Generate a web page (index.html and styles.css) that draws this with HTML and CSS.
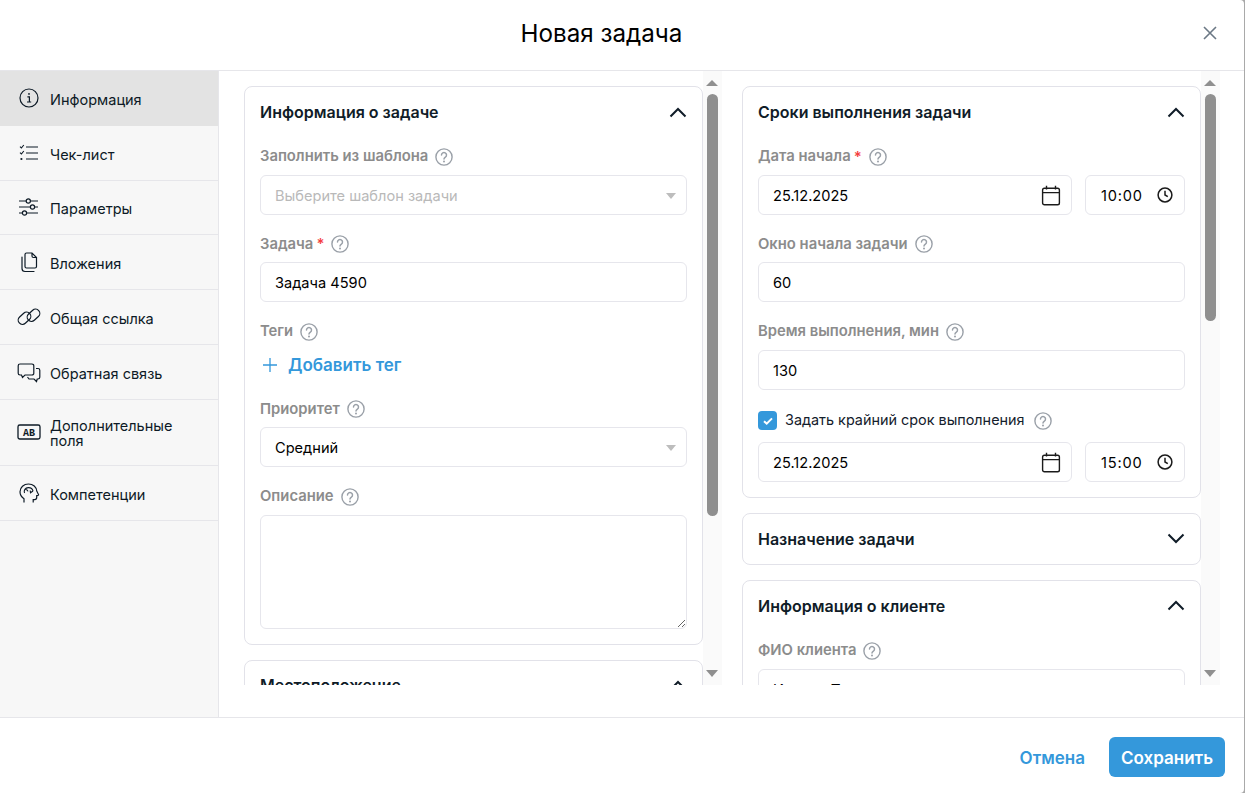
FILE: index.html
```html
<!DOCTYPE html>
<html lang="ru">
<head>
  <meta charset="UTF-8">
  <title>Новая задача</title>
  <link rel="stylesheet" href="styles.css">
</head>
<body>
  <svg class="sprite" xmlns="http://www.w3.org/2000/svg">
    <symbol id="help" viewBox="0 0 18 18">
      <circle cx="9" cy="9" r="8.1" fill="none" stroke="currentColor" stroke-width="1.4"/>
      <path d="M6.5 7a2.5 2.5 0 1 1 3.9 2.1c-.9.6-1.4 1.1-1.4 2" fill="none" stroke="currentColor" stroke-width="1.5" stroke-linecap="round"/>
      <circle cx="9" cy="13.6" r="1" fill="currentColor"/>
    </symbol>
    <symbol id="up" viewBox="0 0 18 11">
      <path d="M1.5 9.5 9 2l7.5 7.5" fill="none" stroke="currentColor" stroke-width="2"/>
    </symbol>
    <symbol id="down" viewBox="0 0 18 11">
      <path d="M1.5 1.5 9 9l7.5-7.5" fill="none" stroke="currentColor" stroke-width="2"/>
    </symbol>
    <symbol id="calendar" viewBox="0 0 20 21">
      <rect x="1.6" y="3.2" width="16.8" height="16.6" rx="1.8" fill="none" stroke="currentColor" stroke-width="1.4"/>
      <path d="M1.6 7.6h16.8M5.5 .8v3.600M14.5 .8v3.600" fill="none" stroke="currentColor" stroke-width="1.4"/>
    </symbol>
    <symbol id="clock" viewBox="0 0 16 16">
      <circle cx="8" cy="8" r="6.9" fill="none" stroke="currentColor" stroke-width="1.5"/>
      <path d="M8 3.8V8l2.8 1.7" fill="none" stroke="currentColor" stroke-width="1.5"/>
    </symbol>
  </svg>

  <div class="dialog">
    <header class="dialog-head">
      <h1>Новая задача</h1>
      <button class="close" type="button" aria-label="Закрыть">
        <svg width="14" height="14" viewBox="0 0 14 14"><path d="M1 1l12 12M13 1 1 13" fill="none" stroke="currentColor" stroke-width="1.6"/></svg>
      </button>
    </header>

    <div class="dialog-body">
      <nav class="side">
        <a class="side-item active">
          <svg class="side-icon" viewBox="0 0 22 22"><circle cx="11" cy="11" r="9" fill="none" stroke="currentColor" stroke-width="1.2"/><path d="M9.4 9.8h2v5M9 15h4.2" fill="none" stroke="currentColor" stroke-width="1.2"/><circle cx="11" cy="6.9" r=".9" fill="currentColor"/></svg>
          <span>Информация</span>
        </a>
        <a class="side-item">
          <svg class="side-icon" viewBox="0 0 22 22"><path d="M8 5h12M8 11h12M8 17h12" fill="none" stroke="currentColor" stroke-width="1.2"/><path d="M2 4.6l1.4 1.4L5.8 3M2 10.6 3.4 12l2.4-3" fill="none" stroke="currentColor" stroke-width="1.1"/><circle cx="3.4" cy="17" r="1.1" fill="currentColor"/></svg>
          <span>Чек-лист</span>
        </a>
        <a class="side-item">
          <svg class="side-icon" viewBox="0 0 22 22"><path d="M1 5h7.2M12.4 5H20M1 11h11.4M16.6 11H20M1 17h3.4M8.6 17H20" fill="none" stroke="currentColor" stroke-width="1.2"/><circle cx="10.3" cy="5" r="2.1" fill="none" stroke="currentColor" stroke-width="1.2"/><circle cx="14.5" cy="11" r="2.1" fill="none" stroke="currentColor" stroke-width="1.2"/><circle cx="6.5" cy="17" r="2.1" fill="none" stroke="currentColor" stroke-width="1.2"/></svg>
          <span>Параметры</span>
        </a>
        <a class="side-item">
          <svg class="side-icon" viewBox="0 0 22 22"><path d="M7 3.5A1.5 1.5 0 0 1 8.5 2H14l4.5 4.5v9a1.5 1.5 0 0 1-1.500 1.500H8.500A1.500 1.500 0 0 1 7 15.500zM14 2v3a1.500 1.500 0 0 0 1.500 1.500h3" fill="none" stroke="currentColor" stroke-width="1.2"/><path d="M4 6v11.500A3 3 0 0 0 7 20.500h9" fill="none" stroke="currentColor" stroke-width="1.2" stroke-linecap="round"/></svg>
          <span>Вложения</span>
        </a>
        <a class="side-item">
          <svg class="side-icon wide" viewBox="0 0 24 22"><rect x=".5" y="8" width="14" height="8.5" rx="4.25" transform="rotate(-42 7.5 12.25)" fill="none" stroke="currentColor" stroke-width="1.2"/><rect x="9.5" y="5" width="14" height="8.5" rx="4.25" transform="rotate(-42 16.5 9.25)" fill="none" stroke="currentColor" stroke-width="1.2"/></svg>
          <span>Общая ссылка</span>
        </a>
        <a class="side-item">
          <svg class="side-icon wide" viewBox="0 0 24 22"><path d="M3 3h12a1.800 1.800 0 0 1 1.800 1.800v7.400A1.800 1.800 0 0 1 15 14H8l-2.500 2.500L4.500 14H3a1.800 1.800 0 0 1-1.800-1.800V4.800A1.800 1.800 0 0 1 3 3z" fill="none" stroke="currentColor" stroke-width="1.2"/><path d="M19 7.500h2a1.800 1.800 0 0 1 1.800 1.800v7A1.800 1.800 0 0 1 21 18h-.8l-.7 2.500L17 18h-5l-1.500-2" fill="none" stroke="currentColor" stroke-width="1.2"/></svg>
          <span>Обратная связь</span>
        </a>
        <a class="side-item two-line">
          <svg class="side-icon wide" viewBox="0 0 24 22"><rect x="1" y="4" width="22" height="14" rx="1.8" fill="none" stroke="currentColor" stroke-width="1.3"/><text x="12" y="14.5" text-anchor="middle" class="ab">AB</text></svg>
          <span>Дополнительные поля</span>
        </a>
        <a class="side-item">
          <svg class="side-icon" viewBox="0 0 22 22"><path d="M6 20.500v-3.800C3.400 15 2 12.500 2 9.800 2 5.300 5.800 2 10.500 2c4.600 0 8 3 8.300 7.200l1.700 3.300c.2.400 0 .7-.4.800l-1.400.3v2c0 1.100-.9 2-2 2h-1.500v2.900" fill="none" stroke="currentColor" stroke-width="1.2"/><path d="M6.500 11c-1-2.600.8-5.200 3.700-5.400 2.400-.1 4.400 1.400 4.800 3.400M7.800 7.500c1.300.2 2 .9 2.200 1.800M15 9l-2.500 1.800-.3-2.300" fill="none" stroke="currentColor" stroke-width="1.1"/></svg>
          <span>Компетенции</span>
        </a>
      </nav>

      <main class="panes">
        <section class="pane">
          <div class="scroller">
            <div class="card">
              <div class="card-head">
                <h2>Информация о задаче</h2>
                <svg class="chevron"><use href="#up"/></svg>
              </div>
              <div class="field">
                <div class="label">Заполнить из шаблона <svg class="help"><use href="#help"/></svg></div>
                <div class="select-wrap">
                  <select class="control placeholder"><option>Выберите шаблон задачи</option></select>
                </div>
              </div>
              <div class="field">
                <div class="label">Задача<i class="req">*</i> <svg class="help"><use href="#help"/></svg></div>
                <input class="control" type="text" value="Задача 4590">
              </div>
              <div class="field">
                <div class="label">Теги <svg class="help"><use href="#help"/></svg></div>
                <a class="add-tag">
                  <svg width="14" height="14" viewBox="0 0 14 14"><path d="M7 0v14M0 7h14" fill="none" stroke="currentColor" stroke-width="1.3"/></svg>
                  Добавить тег
                </a>
              </div>
              <div class="field">
                <div class="label">Приоритет <svg class="help"><use href="#help"/></svg></div>
                <div class="select-wrap">
                  <select class="control"><option>Средний</option></select>
                </div>
              </div>
              <div class="field last">
                <div class="label">Описание <svg class="help"><use href="#help"/></svg></div>
                <textarea class="control area"></textarea>
              </div>
            </div>

            <div class="card">
              <div class="card-head">
                <h2>Местоположение</h2>
                <svg class="chevron"><use href="#up"/></svg>
              </div>
            </div>
          </div>
          <div class="bar">
            <span class="arrow arrow-up"></span>
            <div class="track"><span class="thumb" style="height: 422px"></span></div>
            <span class="arrow arrow-down"></span>
          </div>
        </section>

        <section class="pane">
          <div class="scroller">
            <div class="card">
              <div class="card-head">
                <h2>Сроки выполнения задачи</h2>
                <svg class="chevron"><use href="#up"/></svg>
              </div>
              <div class="field">
                <div class="label">Дата начала<i class="req">*</i> <svg class="help"><use href="#help"/></svg></div>
                <div class="date-row">
                  <div class="date-box">
                    <input class="control" type="text" value="25.12.2025">
                    <svg class="cal"><use href="#calendar"/></svg>
                  </div>
                  <div class="time-box">
                    <input class="control" type="text" value="10:00">
                    <svg class="clock"><use href="#clock"/></svg>
                  </div>
                </div>
              </div>
              <div class="field">
                <div class="label">Окно начала задачи <svg class="help"><use href="#help"/></svg></div>
                <input class="control" type="text" value="60">
              </div>
              <div class="field">
                <div class="label">Время выполнения, мин <svg class="help"><use href="#help"/></svg></div>
                <input class="control" type="text" value="130">
              </div>
              <div class="check-row">
                <span class="check">
                  <svg width="12" height="10" viewBox="0 0 12 10"><path d="M2 5.2 4.7 7.6 10 2.4" fill="none" stroke="#fff" stroke-width="2"/></svg>
                </span>
                <span class="check-text">Задать крайний срок выполнения</span>
                <svg class="help"><use href="#help"/></svg>
              </div>
              <div class="date-row">
                <div class="date-box">
                  <input class="control" type="text" value="25.12.2025">
                  <svg class="cal"><use href="#calendar"/></svg>
                </div>
                <div class="time-box">
                  <input class="control" type="text" value="15:00">
                  <svg class="clock"><use href="#clock"/></svg>
                </div>
              </div>
            </div>

            <div class="card collapsed">
              <div class="card-head">
                <h2>Назначение задачи</h2>
                <svg class="chevron"><use href="#down"/></svg>
              </div>
            </div>

            <div class="card">
              <div class="card-head">
                <h2>Информация о клиенте</h2>
                <svg class="chevron"><use href="#up"/></svg>
              </div>
              <div class="field">
                <div class="label">ФИО клиента <svg class="help"><use href="#help"/></svg></div>
                <input class="control" type="text" value="Иванов Петр">
              </div>
            </div>
          </div>
          <div class="bar">
            <span class="arrow arrow-up"></span>
            <div class="track"><span class="thumb" style="height: 227px"></span></div>
            <span class="arrow arrow-down"></span>
          </div>
        </section>
      </main>
    </div>

    <footer class="dialog-foot">
      <button class="btn-link" type="button">Отмена</button>
      <button class="btn-save" type="button">Сохранить</button>
    </footer>
  </div>
</body>
</html>
```

FILE: styles.css
```css
:root {
  font: 14.6px/1.3 Inter, "Noto Sans", sans-serif;
  color: #101c28;
  background: #a9a9a9;
}

html,
body {
  height: 100%;
}

body {
  margin: 0;
  overflow: hidden;
}

.sprite {
  display: none;
}

.dialog {
  width: 1244px;
  height: 793px;
  display: flex;
  flex-direction: column;
  background: #fff;
  border-radius: 0 4px 4px 0;
}

.dialog-head {
  flex: 0 0 71px;
  box-sizing: border-box;
  display: flex;
  align-items: center;
  padding: 0 27px 2px 0;
  border-bottom: 1px solid #e6e6ea;
}

  .dialog-head h1 {
    flex: 1 1 0%;
    margin: 0;
    text-align: center;
    font-size: 24.2px;
    font-weight: 400;
    color: #000;
  }

.close {
  width: 14px;
  height: 14px;
  margin-bottom: 2px;
  padding: 0;
  border: 0;
  display: flex;
  color: #6b7885;
  background: none;
}

.dialog-body {
  flex: 0 0 646px;
  display: flex;
  min-height: 0;
}

.side {
  flex: 0 0 219px;
  box-sizing: border-box;
  border-right: 1px solid #e6e6ea;
  background: #f7f7f7;
}

.side-item {
  box-sizing: border-box;
  min-height: 54.8px;
  padding: 11px 36px 11px 18px;
  display: flex;
  align-items: center;
  gap: 10px;
  border-bottom: 1px solid #e6e6ea;
  font-size: 14.5px;
  line-height: 15px;
  color: #0d1a26;
}

  .side-item span {
    padding-top: 3px;
  }

  .side-item.active {
    background: #e3e3e3;
    border-bottom-color: #e3e3e3;
  }

  .side-item.two-line {
    padding-top: 17px;
    padding-bottom: 17px;
  }

    .side-item.two-line span {
      padding-top: 1px;
    }

.side-icon {
  flex: 0 0 22px;
  width: 22px;
  height: 22px;
}

  .side-icon.wide {
    flex-basis: 24px;
    width: 24px;
    margin: 0 -1px;
  }

.ab {
  font: 700 10px "Liberation Mono", monospace;
  fill: currentColor;
}

.panes {
  flex: 1 1 0%;
  display: flex;
  gap: 20px;
  height: 614px;
  padding-left: 25px;
}

.pane {
  flex: 0 0 478px;
  display: flex;
  min-height: 0;
}

.scroller {
  flex: 0 0 459px;
  box-sizing: border-box;
  padding-top: 15px;
  overflow: hidden;
  display: flex;
  flex-direction: column;
  gap: 15px;
}

.bar {
  flex: 0 0 19px;
  display: flex;
  flex-direction: column;
  background: #fafafa;
}

.arrow {
  flex: none;
  width: 0;
  margin-left: 3px;
  border: 6.5px solid transparent;
  border-top-width: 0;
  border-bottom-width: 0;
}

.arrow-up {
  margin-top: 9px;
  border-bottom: 6px solid #8f8f8f;
}

.arrow-down {
  margin-bottom: 8px;
  border-top: 7px solid #8f8f8f;
}

.track {
  flex: 1 1 0%;
  padding-top: 8px;
}

.thumb {
  display: block;
  width: 11px;
  margin-left: 4px;
  border-radius: 6px;
  background: #8f8f8f;
}

.card {
  flex: none;
  padding: 0 15px 15px;
  border: 1px solid #e2e2e9;
  border-radius: 8px;
  background: #fff;
}

  .card.collapsed {
    padding-bottom: 0;
  }

    .card.collapsed .card-head {
      padding-bottom: 12px;
    }

.card-head {
  height: 26px;
  padding: 12px 0 21px;
  display: flex;
  align-items: center;
  justify-content: space-between;
}

  .card-head h2 {
    margin: 0;
    font-size: 16px;
    font-weight: 600;
    color: #101c28;
  }

.chevron {
  width: 18px;
  height: 11px;
  color: #101c28;
}

.field {
  margin-bottom: 18.4px;
}

  .field.last {
    margin-bottom: 0;
  }

.label {
  box-sizing: border-box;
  height: 20px;
  padding-top: 2px;
  margin-bottom: 9px;
  display: flex;
  align-items: center;
  font-size: 14.8px;
  font-weight: 600;
  color: #8c8c8c;
}

.req {
  align-self: flex-start;
  margin-left: 3px;
  font-style: normal;
  color: #f43f3f;
}

.help {
  flex: none;
  width: 18px;
  height: 18px;
  margin-left: 7px;
  color: #9aa0a8;
}

.control {
  box-sizing: border-box;
  display: block;
  width: 100%;
  height: 40px;
  margin: 0;
  padding: 2px 14px 0;
  border: 1px solid #e6e6ec;
  border-radius: 6px;
  font: inherit;
  color: #000;
  background: #fff;
  outline: 0;
}

select.control {
  appearance: none;
}

  select.placeholder {
    color: #b9b9b9;
  }

.select-wrap {
  position: relative;
}

  .select-wrap::after {
    content: "";
    position: absolute;
    top: 18px;
    right: 11px;
    border: 5.5px solid transparent;
    border-bottom-width: 0;
    border-top: 6px solid #bdbdbd;
  }

.area {
  height: 114px;
  padding: 10px 14px;
}

.add-tag {
  box-sizing: border-box;
  height: 30px;
  padding: 1px 0 0 3px;
  display: flex;
  align-items: center;
  gap: 11px;
  font-size: 17px;
  font-weight: 600;
  color: #3498db;
}

.date-row {
  display: flex;
  gap: 13px;
}

.date-box {
  flex: 1 1 0%;
  position: relative;
}

.time-box {
  flex: 0 0 100px;
  position: relative;
}

  .time-box .control {
    padding-left: 15px;
    letter-spacing: 0.8px;
  }

.cal {
  position: absolute;
  top: 10px;
  right: 11px;
  width: 20px;
  height: 21px;
  color: #1b1b1b;
}

.clock {
  position: absolute;
  top: 12px;
  right: 12px;
  width: 16px;
  height: 16px;
  color: #1b1b1b;
}

.check-row {
  height: 25px;
  margin-bottom: 8.8px;
  display: flex;
  align-items: center;
}

  .check-row .help {
    margin-left: 9px;
  }

.check {
  flex: none;
  width: 19px;
  height: 19px;
  margin-right: 8px;
  display: flex;
  align-items: center;
  justify-content: center;
  border-radius: 4px;
  background: #3498db;
}

.check-text {
  font-size: 14.4px;
  color: #14202c;
}

.dialog-foot {
  flex: 1 1 0%;
  box-sizing: border-box;
  display: flex;
  align-items: flex-start;
  justify-content: flex-end;
  gap: 24px;
  padding: 19px 19px 0 0;
  border-top: 1px solid #e6e6ea;
}

.btn-link,
.btn-save {
  height: 40px;
  padding: 2px 0 0;
  border: 0;
  font: 600 17px Inter, "Noto Sans", sans-serif;
  color: #3498db;
  background: none;
}

.btn-save {
  width: 116px;
  border-radius: 6px;
  color: #fff;
  background: #3498db;
}
```
